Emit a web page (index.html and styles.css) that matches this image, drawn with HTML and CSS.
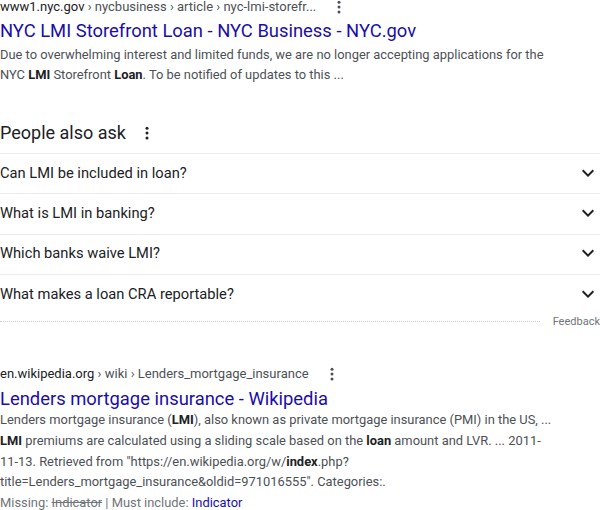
FILE: index.html
```html
<!DOCTYPE html>
<html>
<head>
<meta charset="utf-8">
<link rel="stylesheet" href="styles.css">
</head>
<body>
<div class="page">
  <div class="result">
    <div class="crumb">
      <span class="crumb-text"><span class="host">www1.nyc.gov</span> › nycbusiness › article › nyc-lmi-storefr...</span>
      <svg class="kebab" viewBox="0 0 24 24" width="18" height="18"><circle cx="12" cy="5.5" r="2"/><circle cx="12" cy="12" r="2"/><circle cx="12" cy="18.5" r="2"/></svg>
    </div>
    <div class="title">NYC LMI Storefront Loan - NYC Business - NYC.gov</div>
    <div class="snippet">Due to overwhelming interest and limited funds, we are no longer accepting applications for the<br>NYC <b>LMI</b> Storefront <b>Loan</b>. To be notified of updates to this ...</div>
  </div>

  <div class="paa">
    <div class="paa-head">
      <span>People also ask</span>
      <svg class="kebab" viewBox="0 0 24 24" width="18" height="18"><circle cx="12" cy="5.5" r="2"/><circle cx="12" cy="12" r="2"/><circle cx="12" cy="18.5" r="2"/></svg>
    </div>
    <div class="q"><span>Can LMI be included in loan?</span><svg class="chev" viewBox="0 0 24 24" width="24" height="24"><path d="M16.59 8.59L12 13.17 7.41 8.59 6 10l6 6 6-6z"/></svg></div>
    <div class="q"><span>What is LMI in banking?</span><svg class="chev" viewBox="0 0 24 24" width="24" height="24"><path d="M16.59 8.59L12 13.17 7.41 8.59 6 10l6 6 6-6z"/></svg></div>
    <div class="q"><span>Which banks waive LMI?</span><svg class="chev" viewBox="0 0 24 24" width="24" height="24"><path d="M16.59 8.59L12 13.17 7.41 8.59 6 10l6 6 6-6z"/></svg></div>
    <div class="q"><span>What makes a loan CRA reportable?</span><svg class="chev" viewBox="0 0 24 24" width="24" height="24"><path d="M16.59 8.59L12 13.17 7.41 8.59 6 10l6 6 6-6z"/></svg></div>
    <div class="feedback-row">
      <div class="dots"></div>
      <span class="feedback">Feedback</span>
    </div>
  </div>

  <div class="result wiki">
    <div class="crumb">
      <span class="crumb-text"><span class="host">en.wikipedia.org</span> › wiki › Lenders_mortgage_insurance</span>
      <svg class="kebab" viewBox="0 0 24 24" width="18" height="18"><circle cx="12" cy="5.5" r="2"/><circle cx="12" cy="12" r="2"/><circle cx="12" cy="18.5" r="2"/></svg>
    </div>
    <div class="title">Lenders mortgage insurance - Wikipedia</div>
    <div class="snippet long">Lenders mortgage insurance (<b>LMI</b>), also known as private mortgage insurance (PMI) in the US, ...<br><b>LMI</b> premiums are calculated using a sliding scale based on the <b>loan</b> amount and LVR. ... 2011-<br>11-13. Retrieved from "https://en.wikipedia.org/w/<b>index</b>.php?<br>title=Lenders_mortgage_insurance&amp;oldid=971016555". Categories:.<br><span class="muted">Missing: <s>Indicator</s> | Must include: <span class="link">Indicator</span></span></div>
  </div>
</div>
</body>
</html>
```
FILE: styles.css
```css
html, body {
  margin: 0;
  padding: 0;
  background: #fff;
}
body {
  font-family: Roboto, "Liberation Sans", Arial, sans-serif;
  color: #202124;
  width: 600px;
  overflow: hidden;
}
.page {
  display: flex;
  flex-direction: column;
}
.crumb {
  display: flex;
  align-items: center;
  gap: 14px;
  font-size: 13px;
  line-height: 14px;
  height: 14px;
  color: #4d5156;
}
.crumb .host {
  color: #202124;
}
.kebab {
  fill: #4d5156;
  flex: none;
}
.title {
  padding-top: 4px;
  font-size: 18.4px;
  line-height: 26px;
  color: #1a0dab;
}
.snippet {
  margin-top: 1px;
  font-size: 12.9px;
  line-height: 20px;
  color: #4d5156;
}
.snippet b {
  color: #202124;
  font-weight: 700;
}
.paa {
  margin-top: 34px;
  display: flex;
  flex-direction: column;
}
.paa-head {
  display: flex;
  align-items: center;
  gap: 12px;
  font-size: 18px;
  line-height: 28px;
  height: 28px;
  margin-bottom: 6px;
}
.paa-head .kebab {
  fill: #202124;
}
.q {
  display: flex;
  align-items: center;
  justify-content: space-between;
  box-sizing: border-box;
  height: 40.3px;
  padding-bottom: 2px;
  border-top: 1px solid #ebebeb;
  font-size: 14.7px;
  color: #202124;
}
.chev {
  fill: #202124;
}
.feedback-row {
  display: flex;
  align-items: center;
  gap: 13px;
  height: 14px;
}
.dots {
  flex: 1;
  border-top: 1px dotted #cfd1d3;
}
.feedback {
  font-size: 11px;
  color: #70757a;
}
.wiki {
  margin-top: 36px;
}
.wiki .crumb {
  height: 20px;
  line-height: 20px;
}
.wiki .title {
  padding-top: 3px;
  line-height: 24px;
}
.snippet.long {
  margin-top: -1px;
  line-height: 20.75px;
}
.muted {
  color: #70757a;
}
.link {
  color: #1a0dab;
}
```
